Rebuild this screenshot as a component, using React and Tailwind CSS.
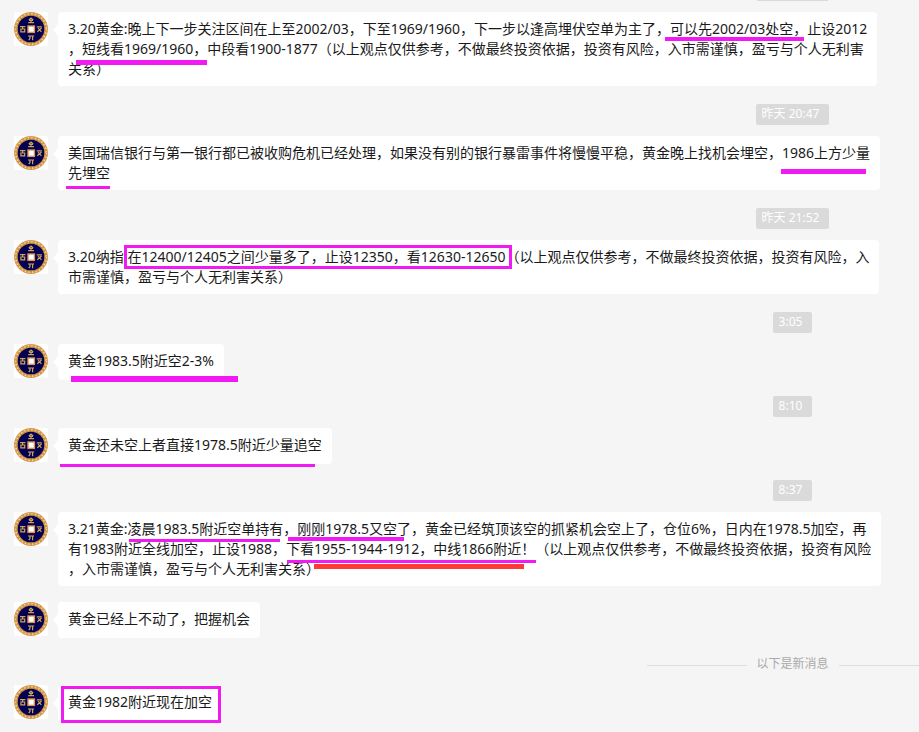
const messages = [
  {
    id: 1,
    lines: [
      '3.20黄金:晚上下一步关注区间在上至2002/03，下至1969/1960，下一步以逢高埋伏空单为主了，可以先2002/03处空，止设2012',
      '，短线看1969/1960，中段看1900-1877（以上观点仅供参考，不做最终投资依据，投资有风险，入市需谨慎，盈亏与个人无利害',
      '关系）',
    ],
    space: 'mb-[18px]',
    marks: [
      'left-[607px] top-[25px] w-[139px] h-1 bg-[#f21af2]',
      'left-[18px] top-12 w-[131px] h-[5px] bg-[#f21af2]',
    ],
  },
  {
    id: 2,
    time: '昨天 20:47',
    lines: [
      '美国瑞信银行与第一银行都已被收购危机已经处理，如果没有别的银行暴雷事件将慢慢平稳，黄金晚上找机会埋空，1986上方少量',
      '先埋空',
    ],
    space: 'mb-[18px]',
    marks: [
      'left-[723px] top-[33px] w-[85px] h-[5px] bg-[#f21af2]',
      'left-2 top-[50px] w-11 h-[3px] bg-[#f21af2]',
    ],
  },
  {
    id: 3,
    time: '昨天 21:52',
    lines: [
      '3.20纳指:在12400/12405之间少量多了，止设12350，看12630-12650（以上观点仅供参考，不做最终投资依据，投资有风险，入',
      '市需谨慎，盈亏与个人无利害关系）',
    ],
    space: 'mb-[18px]',
    marks: ['left-[66px] top-[5px] w-[388px] h-6 border-3 border-[#f21af2]'],
  },
  {
    id: 4,
    time: '3:05',
    lines: ['黄金1983.5附近空2-3%'],
    space: 'mb-4',
    marks: ['left-[13px] top-8 w-[167px] h-1.5 bg-[#f21af2]'],
  },
  {
    id: 5,
    time: '8:10',
    lines: ['黄金还未空上者直接1978.5附近少量追空'],
    space: 'mb-4',
    marks: ['left-0.5 top-9 w-[255px] h-[3px] bg-[#f21af2]'],
  },
  {
    id: 6,
    time: '8:37',
    lines: [
      '3.21黄金:凌晨1983.5附近空单持有，刚刚1978.5又空了，黄金已经筑顶该空的抓紧机会空上了，仓位6%，日内在1978.5加空，再',
      '有1983附近全线加空，止设1988，下看1955-1944-1912，中线1866附近！（以上观点仅供参考，不做最终投资依据，投资有风险',
      '，入市需谨慎，盈亏与个人无利害关系）',
    ],
    space: 'mb-4',
    marks: [
      'left-[71px] top-[27px] w-[151px] h-[3px] bg-[#f21af2]',
      'left-[230px] top-[25px] w-[116px] h-1 bg-[#f21af2]',
      'left-[229px] top-12 w-[249px] h-[3px] bg-[#f21af2]',
      'left-64 top-[52px] w-[210px] h-[5px] bg-[#ff3838]',
    ],
  },
  { id: 7, lines: ['黄金已经上不动了，把握机会'], space: 'mb-4', marks: [] },
  {
    id: 8,
    isNew: true,
    lines: ['黄金1982附近现在加空'],
    space: 'mb-[11px]',
    marks: ['left-[3px] top-px w-40 h-[37px] border-3 border-[#f21af2]'],
  },
];

// old coin with a square hole
function Avatar() {
  return (
    <svg viewBox="0 0 34 34" className="w-[34px] h-[34px] shrink-0 bg-white rounded-xs" aria-hidden="true">
      <circle cx="17" cy="17" r="17" fill="#d39a4e" />
      <circle cx="17" cy="17" r="15.3" fill="none" stroke="#f2d49c" strokeWidth="1.7" strokeDasharray="1.3 2.3" />
      <circle cx="17" cy="17" r="14" fill="none" stroke="#b8742f" strokeWidth="0.8" strokeDasharray="2 2.2" />
      <circle cx="17" cy="17" r="13.3" fill="#050052" />
      <rect x="14" y="14" width="6.4" height="6.4" fill="#fff" stroke="#e0944a" strokeWidth="1.4" />
      <g fill="none" stroke="#c9a75a" strokeWidth="1.2">
        <path d="M17 5.8 14.8 8.2M17 5.8l2.2 2.4M15.2 8.4h3.8M17 7.5v3M14.2 10.6h5.8" />
        <path d="M6 14.7h5.4M8.6 14.8v2M6.9 17h3.8v2.9H6.9z" />
        <path d="M22.8 14.9h5M24 16.2l3.4 3.6M27.5 16l-4.2 3.8" />
        <path d="M14 24h6.2M16 24v2.4l-1.2 1.8M18.6 24v4.2" />
      </g>
    </svg>
  );
}

function TimeLabel({ text }) {
  return (
    <div className="flex justify-center pl-[666px] mb-[11px]">
      <time className="h-[21px] pl-1.5 pr-2.5 rounded-xs bg-[#dadada] text-white text-xs leading-5 whitespace-nowrap">
        {text}
      </time>
    </div>
  );
}

function NewDivider() {
  return (
    <div className="flex justify-center items-center gap-2.5 pl-[666px] h-5 mb-[11px]">
      <span className="w-[100px] h-px mt-0.5 shrink-0 bg-[#dedede]"></span>
      <span className="text-xs leading-5 text-[#aaaaaa] whitespace-nowrap">以下是新消息</span>
      <span className="w-[100px] h-px mt-0.5 shrink-0 bg-[#dedede]"></span>
    </div>
  );
}

function Message({ message }) {
  return (
    <div className={`flex items-start gap-2.5 pl-3.5 ${message.space}`}>
      <Avatar />
      <div className="relative min-h-9 px-2.5 py-[7px] rounded-sm bg-white">
        <svg viewBox="0 0 5 12" className="absolute -left-[5px] top-3 w-[5px] h-3" aria-hidden="true">
          <path d="M5 0v12L0 6z" fill="#fff" />
        </svg>
        <p className="text-sm leading-5 text-[#1a1a1a] whitespace-nowrap">
          {message.lines.map((line) => (
            <span key={line} className="block">{line}</span>
          ))}
        </p>
        {message.marks.map((mark) => (
          <span key={mark} className={`absolute ${mark}`}></span>
        ))}
      </div>
    </div>
  );
}

export default function App() {
  return (
    <main
      lang="zh-CN"
      className="min-h-screen overflow-hidden bg-[#f5f5f5] font-['Noto_Sans','Noto_Sans_CJK_SC',sans-serif]"
    >
      {/* bottom edge of the label scrolled out above */}
      <div className="flex justify-center pl-[666px] mb-[11px]">
        <span className="w-[71px] h-px bg-[#dadada]"></span>
      </div>

      {messages.map((message) => (
        <div key={message.id}>
          {message.time && <TimeLabel text={message.time} />}
          {message.isNew && <NewDivider />}
          <Message message={message} />
        </div>
      ))}
    </main>
  );
}
